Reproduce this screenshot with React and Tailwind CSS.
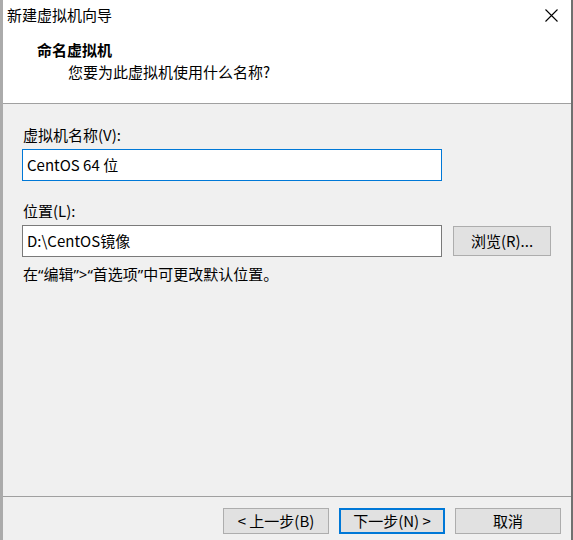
import React from "react";

const font = { fontFamily: '"Noto Sans CJK SC", "Noto Sans", sans-serif' };
const Q = ({ children }) => (
  <span style={{ fontFamily: '"Noto Sans", sans-serif' }}>{children}</span>
);

export default function App() {
  return (
    <div
      className="w-[573px] h-[540px] flex overflow-hidden text-[15px] leading-[20px] text-black"
      style={font}
    >
      <div className="w-[3px] h-full bg-[#ababab] shrink-0" />
      <div className="flex-1 flex flex-col min-w-0">
        {/* header */}
        <div className="h-[104px] bg-white border-b border-[#a0a0a0] flex flex-col shrink-0">
          <div className="h-[30px] flex items-center justify-between pl-[4px] pr-[12px]">
            <span className="text-[15px]">新建虚拟机向导</span>
            <svg width="13" height="13" viewBox="0 0 13 13" className="mr-[1px]">
              <path d="M0.5 0.5 L12.5 12.5 M12.5 0.5 L0.5 12.5" stroke="#000" strokeWidth="1.1" />
            </svg>
          </div>
          <div className="pl-[34px] mt-[10px] font-bold">命名虚拟机</div>
          <div className="pl-[65px] mt-[2px]">您要为此虚拟机使用什么名称?</div>
        </div>
        {/* body */}
        <div className="flex-1 bg-[#f0f0f0] flex flex-col pl-[19px] pt-[21px]">
          <div className="pl-[1px]">虚拟机名称(V):</div>
          <div className="mt-[4px] w-[420px] h-[32px] bg-white border border-[#0078d7] flex items-center pl-[4px]">
            CentOS 64 位
          </div>
          <div className="pl-[1px] mt-[20px]">位置(L):</div>
          <div className="mt-[4px] flex items-center gap-[11px]">
            <div className="w-[420px] h-[32px] bg-white border border-[#7a7a7a] flex items-center pl-[4px]">
              D:\CentOS镜像
            </div>
            <div className="w-[98px] h-[30px] bg-[#e1e1e1] border border-[#adadad] flex items-center justify-center">
              浏览(R)...
            </div>
          </div>
          <div className="pl-[1px] mt-[7px]">
            在<Q>“</Q>编辑<Q>”&gt;“</Q>首选项<Q>”</Q>中可更改默认位置。
          </div>
        </div>
        {/* footer */}
        <div className="h-[44px] bg-[#f0f0f0] border-t border-[#a0a0a0] shrink-0 flex justify-end pt-[11px] pr-[10px] gap-[10px]">
          <div className="w-[106px] h-[26px] bg-[#e1e1e1] border border-[#adadad] flex items-center justify-center">
            &lt; 上一步(B)
          </div>
          <div className="w-[106px] h-[26px] bg-[#e1e1e1] border-2 border-[#0078d7] flex items-center justify-center">
            下一步(N) &gt;
          </div>
          <div className="w-[106px] h-[26px] bg-[#e1e1e1] border border-[#adadad] flex items-center justify-center">
            取消
          </div>
        </div>
      </div>
      <div className="w-[2px] h-full bg-[#707070] shrink-0" />
    </div>
  );
}
